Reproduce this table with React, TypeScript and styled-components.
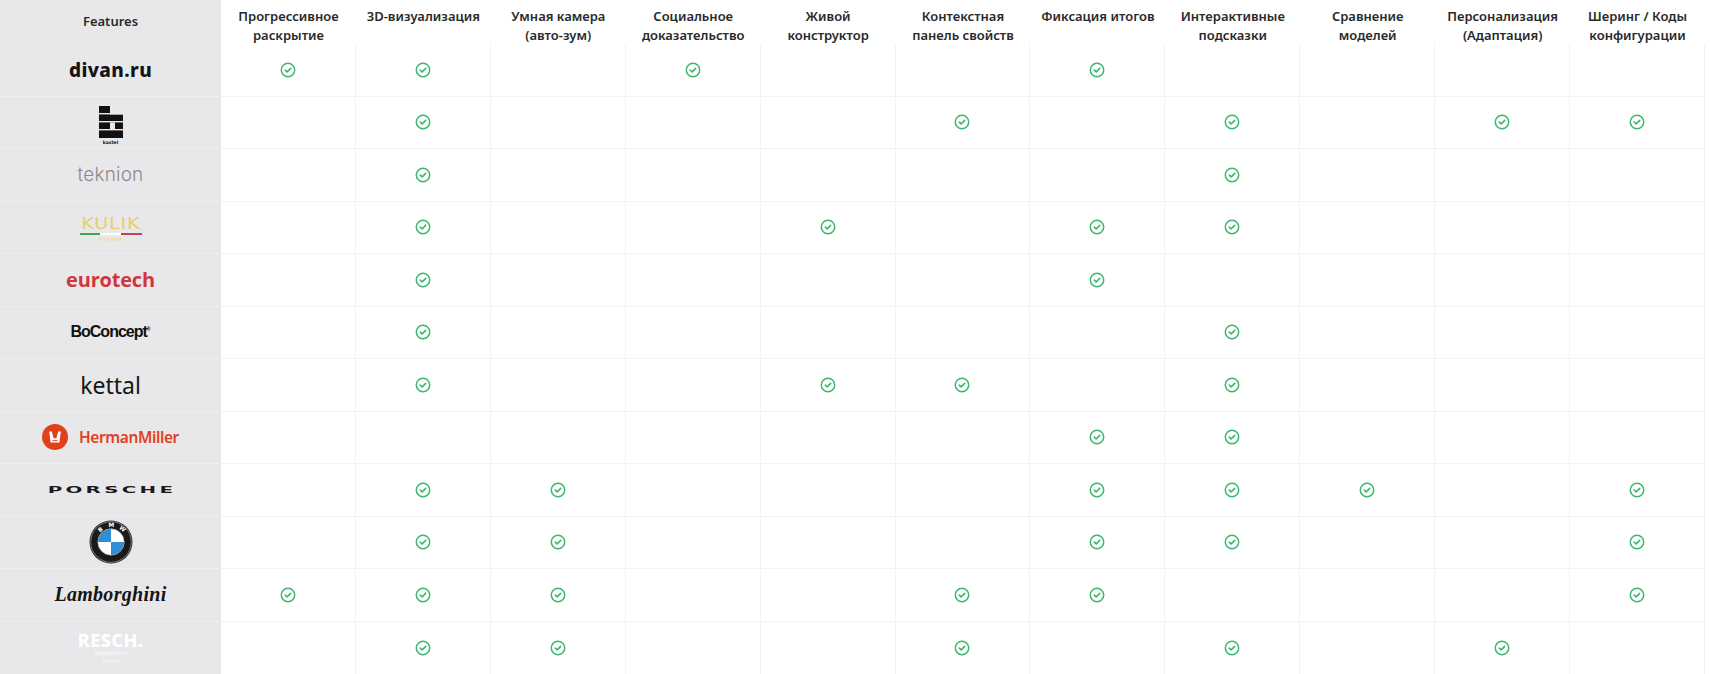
import React from 'react';
import styled, { createGlobalStyle } from 'styled-components';

const GlobalStyle = createGlobalStyle`
  html, body {
    margin: 0;
    padding: 0;
    background: #ffffff;
  }
  body {
    font-family: "Noto Sans", "Open Sans", sans-serif;
  }
`;

const features = [
  ['Прогрессивное', 'раскрытие'],
  ['3D-визуализация'],
  ['Умная камера', '(авто-зум)'],
  ['Социальное', 'доказательство'],
  ['Живой', 'конструктор'],
  ['Контекстная', 'панель свойств'],
  ['Фиксация итогов'],
  ['Интерактивные', 'подсказки'],
  ['Сравнение', 'моделей'],
  ['Персонализация', '(Адаптация)'],
  ['Шеринг / Коды', 'конфигурации'],
];

type Brand = { id: string; checks: number[] };

const brands: Brand[] = [
  { id: 'divan', checks: [1, 2, 4, 7] },
  { id: 'kastel', checks: [2, 6, 8, 10, 11] },
  { id: 'teknion', checks: [2, 8] },
  { id: 'kulik', checks: [2, 5, 7, 8] },
  { id: 'eurotech', checks: [2, 7] },
  { id: 'boconcept', checks: [2, 8] },
  { id: 'kettal', checks: [2, 5, 6, 8] },
  { id: 'hermanmiller', checks: [7, 8] },
  { id: 'porsche', checks: [2, 3, 7, 8, 9, 11] },
  { id: 'bmw', checks: [2, 3, 7, 8, 11] },
  { id: 'lamborghini', checks: [1, 2, 3, 6, 7, 11] },
  { id: 'resch', checks: [2, 3, 6, 8, 10] },
];

const CheckIcon = () => (
  <svg width="16" height="16" viewBox="0 0 16 16" fill="none">
    <circle cx="8" cy="8" r="6.7" stroke="#3bb86d" strokeWidth="1.5" />
    <path d="M5.3 8.1 L7.2 9.9 L10.7 6.4" stroke="#3bb86d" strokeWidth="1.6" strokeLinecap="round" strokeLinejoin="round" />
  </svg>
);

const KastelMark = () => (
  <KastelWrap>
    <svg width="24" height="32" viewBox="0 0 24 32">
      <rect x="0" y="0" width="11" height="32" fill="#111" />
      <rect x="11" y="8.5" width="13" height="23.5" fill="#111" />
      <rect x="0" y="7" width="24" height="1.4" fill="#e8e8ea" />
      <rect x="0" y="15" width="24" height="1.4" fill="#e8e8ea" />
      <rect x="0" y="23" width="24" height="1.4" fill="#e8e8ea" />
      <rect x="11" y="16.4" width="5" height="6.6" fill="#e8e8ea" />
    </svg>
    <KastelText>kastel</KastelText>
  </KastelWrap>
);

const HermanMark = () => (
  <svg width="26" height="26" viewBox="0 0 26 26">
    <circle cx="13" cy="13" r="13" fill="#e2401c" />
    <path d="M7.2 7.5 L9.8 7.5 L11.6 14.2 L14.4 14.2 L16.2 7.5 L18.8 7.5 L17.4 18.5 L8.6 18.5 Z" fill="#ffffff" />
    <path d="M10.4 16.6 L15.6 16.6" stroke="#e2401c" strokeWidth="0.9" />
  </svg>
);

const BmwMark = () => (
  <svg width="44" height="44" viewBox="0 0 42 42">
    <circle cx="21" cy="21" r="20.5" fill="#1a1a1a" />
    <circle cx="21" cy="21" r="19.4" fill="none" stroke="#bbbbbb" strokeWidth="0.6" />
    <circle cx="21" cy="21" r="12.6" fill="#ffffff" />
    <path d="M21 21 L21 8.4 A12.6 12.6 0 0 0 8.4 21 Z" fill="#2f8fd4" />
    <path d="M21 21 L21 33.6 A12.6 12.6 0 0 0 33.6 21 Z" fill="#2f8fd4" />
    <circle cx="21" cy="21" r="12.6" fill="none" stroke="#9a9a9a" strokeWidth="0.6" />
    <text x="10.5" y="12" fontSize="5.5" fill="#ffffff" fontFamily="DejaVu Sans" fontWeight="700" transform="rotate(-40 10.5 12)">B</text>
    <text x="18.6" y="6.6" fontSize="5.5" fill="#ffffff" fontFamily="DejaVu Sans" fontWeight="700">M</text>
    <text x="28.3" y="7.8" fontSize="5.5" fill="#ffffff" fontFamily="DejaVu Sans" fontWeight="700" transform="rotate(40 28.3 7.8)">W</text>
  </svg>
);

const renderLogo = (id: string) => {
  switch (id) {
    case 'divan':
      return <Divan>divan.ru</Divan>;
    case 'kastel':
      return <KastelMark />;
    case 'teknion':
      return <Teknion>teknion</Teknion>;
    case 'kulik':
      return (
        <KulikWrap>
          <KulikText>KULIK</KulikText>
          <KulikStripe>
            <span style={{ background: '#3fa35a' }} />
            <span style={{ background: '#ffffff' }} />
            <span style={{ background: '#c2454f' }} />
          </KulikStripe>
          <KulikSub>S Y S T E M</KulikSub>
        </KulikWrap>
      );
    case 'eurotech':
      return <Eurotech>eurotech</Eurotech>;
    case 'boconcept':
      return (
        <BoConcept>
          BoConcept<sup>®</sup>
        </BoConcept>
      );
    case 'kettal':
      return <Kettal>kettal</Kettal>;
    case 'hermanmiller':
      return (
        <HermanRow>
          <HermanMark />
          <HermanText>HermanMiller</HermanText>
        </HermanRow>
      );
    case 'porsche':
      return <Porsche>PORSCHE</Porsche>;
    case 'bmw':
      return <BmwMark />;
    case 'lamborghini':
      return <Lambo>Lamborghini</Lambo>;
    case 'resch':
      return (
        <ReschWrap>
          <ReschText>RESCH.</ReschText>
          <ReschSub>Manufaktur</ReschSub>
          <ReschSub>Leben</ReschSub>
        </ReschWrap>
      );
    default:
      return null;
  }
};

const App: React.FC = () => {
  return (
    <>
      <GlobalStyle />
      <Table>
        <FeatureHead>Features</FeatureHead>
        {features.map((lines, i) => (
          <HeadCell key={i}>
            {lines.map((l) => (
              <div key={l}>{l}</div>
            ))}
          </HeadCell>
        ))}
        {brands.map((brand, r) => (
          <React.Fragment key={brand.id}>
            <BrandCell last={r === brands.length - 1}>{renderLogo(brand.id)}</BrandCell>
            {features.map((_, c) => (
              <Cell key={c} last={r === brands.length - 1}>
                {brand.checks.includes(c + 1) && <CheckIcon />}
              </Cell>
            ))}
          </React.Fragment>
        ))}
      </Table>
    </>
  );
};

const Table = styled.div`
  width: 1705px;
  display: grid;
  grid-template-columns: 221px repeat(11, 1fr);
  grid-template-rows: 44px repeat(12, 52.5px);
`;

const FeatureHead = styled.div`
  background: #e8e8ea;
  color: #2a2a2a;
  font-size: 13px;
  font-weight: 600;
  display: flex;
  justify-content: center;
  padding-top: 12px;
  box-sizing: border-box;
`;

const HeadCell = styled.div`
  color: #2a2a2a;
  font-size: 13px;
  font-weight: 600;
  line-height: 19px;
  text-align: center;
  padding-top: 7px;
  white-space: nowrap;
`;

const BrandCell = styled.div<{ last?: boolean }>`
  background: #e8e8ea;
  border-bottom: ${({ last }) => (last ? 'none' : '1px solid #efeff0')};
  display: flex;
  align-items: center;
  justify-content: center;
  overflow: hidden;
`;

const Cell = styled.div<{ last?: boolean }>`
  border-right: 1px solid #f3f3f3;
  border-bottom: ${({ last }) => (last ? 'none' : '1px solid #f3f3f3')};
  display: flex;
  align-items: center;
  justify-content: center;
`;

const Divan = styled.span`
  font-family: "Noto Sans", sans-serif;
  font-weight: 800;
  font-size: 19px;
  letter-spacing: 0.4px;
  color: #141414;
`;

const KastelWrap = styled.div`
  display: flex;
  flex-direction: column;
  align-items: center;
  gap: 2px;
  margin-top: 6px;
`;

const KastelText = styled.span`
  font-family: "DejaVu Sans", sans-serif;
  font-size: 4.5px;
  font-weight: 700;
  color: #111;
`;

const Teknion = styled.span`
  font-family: "Inter", sans-serif;
  font-weight: 300;
  font-size: 19px;
  color: #8a8a8a;
  letter-spacing: 0.2px;
`;

const KulikWrap = styled.div`
  display: flex;
  flex-direction: column;
  align-items: center;
  margin-top: 4px;
`;

const KulikText = styled.span`
  font-family: "DejaVu Sans", sans-serif;
  font-weight: 400;
  font-size: 15px;
  line-height: 14px;
  letter-spacing: 0.5px;
  color: #e4d06e;
  transform: scaleX(1.3);
`;

const KulikStripe = styled.div`
  display: flex;
  width: 62px;
  height: 2px;
  margin-top: 2px;

  span {
    flex: 1;
  }
`;

const KulikSub = styled.span`
  font-family: "DejaVu Sans", sans-serif;
  font-size: 4px;
  color: #e4d06e;
  margin-top: 2px;
`;

const Eurotech = styled.span`
  font-family: "Open Sans", sans-serif;
  font-weight: 700;
  font-size: 20px;
  color: #d2353b;
  letter-spacing: -0.2px;
`;

const BoConcept = styled.span`
  font-family: "Liberation Sans", sans-serif;
  font-weight: 700;
  font-size: 16px;
  letter-spacing: -1px;
  color: #111;

  sup {
    font-size: 5px;
    letter-spacing: 0;
  }
`;

const Kettal = styled.span`
  font-family: "Noto Sans", sans-serif;
  font-weight: 400;
  font-size: 23px;
  color: #161616;
`;

const HermanRow = styled.div`
  display: flex;
  align-items: center;
  gap: 11px;
`;

const HermanText = styled.span`
  font-family: "Noto Sans", sans-serif;
  font-weight: 600;
  font-size: 15.5px;
  letter-spacing: -0.4px;
  color: #e2401c;
`;

const Porsche = styled.span`
  display: inline-block;
  font-family: "DejaVu Sans", sans-serif;
  font-weight: 700;
  font-size: 12px;
  letter-spacing: 2px;
  margin-right: -2px;
  color: #1a1a1a;
  transform: scale(1.65, 0.75);
`;

const Lambo = styled.span`
  font-family: "Liberation Serif", serif;
  font-style: italic;
  font-weight: 700;
  font-size: 20px;
  color: #151515;
  letter-spacing: 0.3px;
`;

const ReschWrap = styled.div`
  display: flex;
  flex-direction: column;
  align-items: center;
  line-height: 1;
`;

const ReschText = styled.span`
  font-family: "Noto Sans", sans-serif;
  font-weight: 800;
  font-size: 18px;
  color: #ffffff;
  letter-spacing: 0.5px;
`;

const ReschSub = styled.span`
  font-family: "Liberation Serif", serif;
  font-style: italic;
  font-size: 7px;
  color: #ffffff;
  opacity: 0.85;
  margin-top: 1px;
`;

export default App;
